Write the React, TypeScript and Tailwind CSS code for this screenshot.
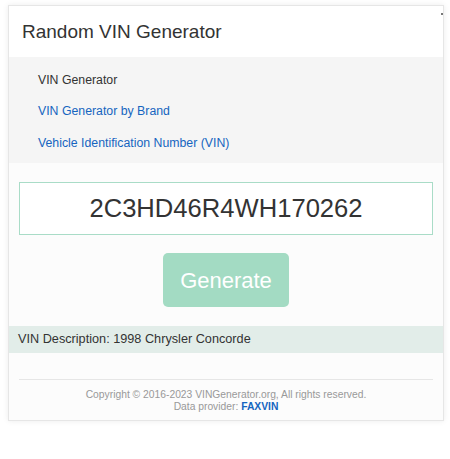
const links = [
  { label: 'VIN Generator', active: true },
  { label: 'VIN Generator by Brand', active: false },
  { label: 'Vehicle Identification Number (VIN)', active: false },
];

export default function App() {
  return (
    <div className="h-[459px] w-[450px] bg-white pt-[5px] pl-[8px] font-['Liberation_Sans',Arial,sans-serif]">
      <div className="relative w-[436px] border border-[#e6e6e6] bg-[#fcfcfc] shadow-[0_0_6px_rgba(0,0,0,0.08)]">
        <span className="absolute right-[0px] top-[7px] h-[2px] w-[2px] bg-[#777]" />
        {/* Header */}
        <div className="flex h-[51px] items-center bg-white pl-[13px]">
          <h1 className="text-[19px] leading-none text-[#333]">Random VIN Generator</h1>
        </div>

        {/* Nav */}
        <ul className="flex h-[106px] flex-col justify-center gap-[10px] bg-[#f5f5f5] pt-[4px] pl-[29px]">
          {links.map((l) => (
            <li
              key={l.label}
              className={`text-[12.3px] leading-[21.5px] ${l.active ? 'text-[#333]' : 'text-[#1565c0]'}`}
            >
              {l.label}
            </li>
          ))}
        </ul>

        {/* Body */}
        <div className="px-[10px] pt-[19px]">
          <div className="flex h-[53px] items-center justify-center border border-[#a9dcc7] bg-white text-[25.6px] text-[#333]">
            2C3HD46R4WH170262
          </div>
          <div className="mt-[18px] flex justify-center">
            <button className="h-[54px] w-[126px] rounded-[5px] bg-[#a3dbc3] text-[22px] text-white">
              Generate
            </button>
          </div>
        </div>

        <div className="mt-[19px] flex h-[27px] items-center bg-[#e2ede9] pl-[9px] text-[12.7px] text-[#333]">
          VIN Description: 1998 Chrysler Concorde
        </div>

        {/* Footer */}
        <div className="px-[10px] pt-[26px] pb-[8px]">
          <div className="border-t border-[#e6e6e6] pt-[9px] text-center text-[10.3px] leading-[11.5px] text-[#999]">
            <p>Copyright © 2016-2023 VINGenerator.org, All rights reserved.</p>
            <p>
              Data provider: <span className="font-bold text-[#1565c0]">FAXVIN</span>
            </p>
          </div>
        </div>
      </div>
    </div>
  );
}
